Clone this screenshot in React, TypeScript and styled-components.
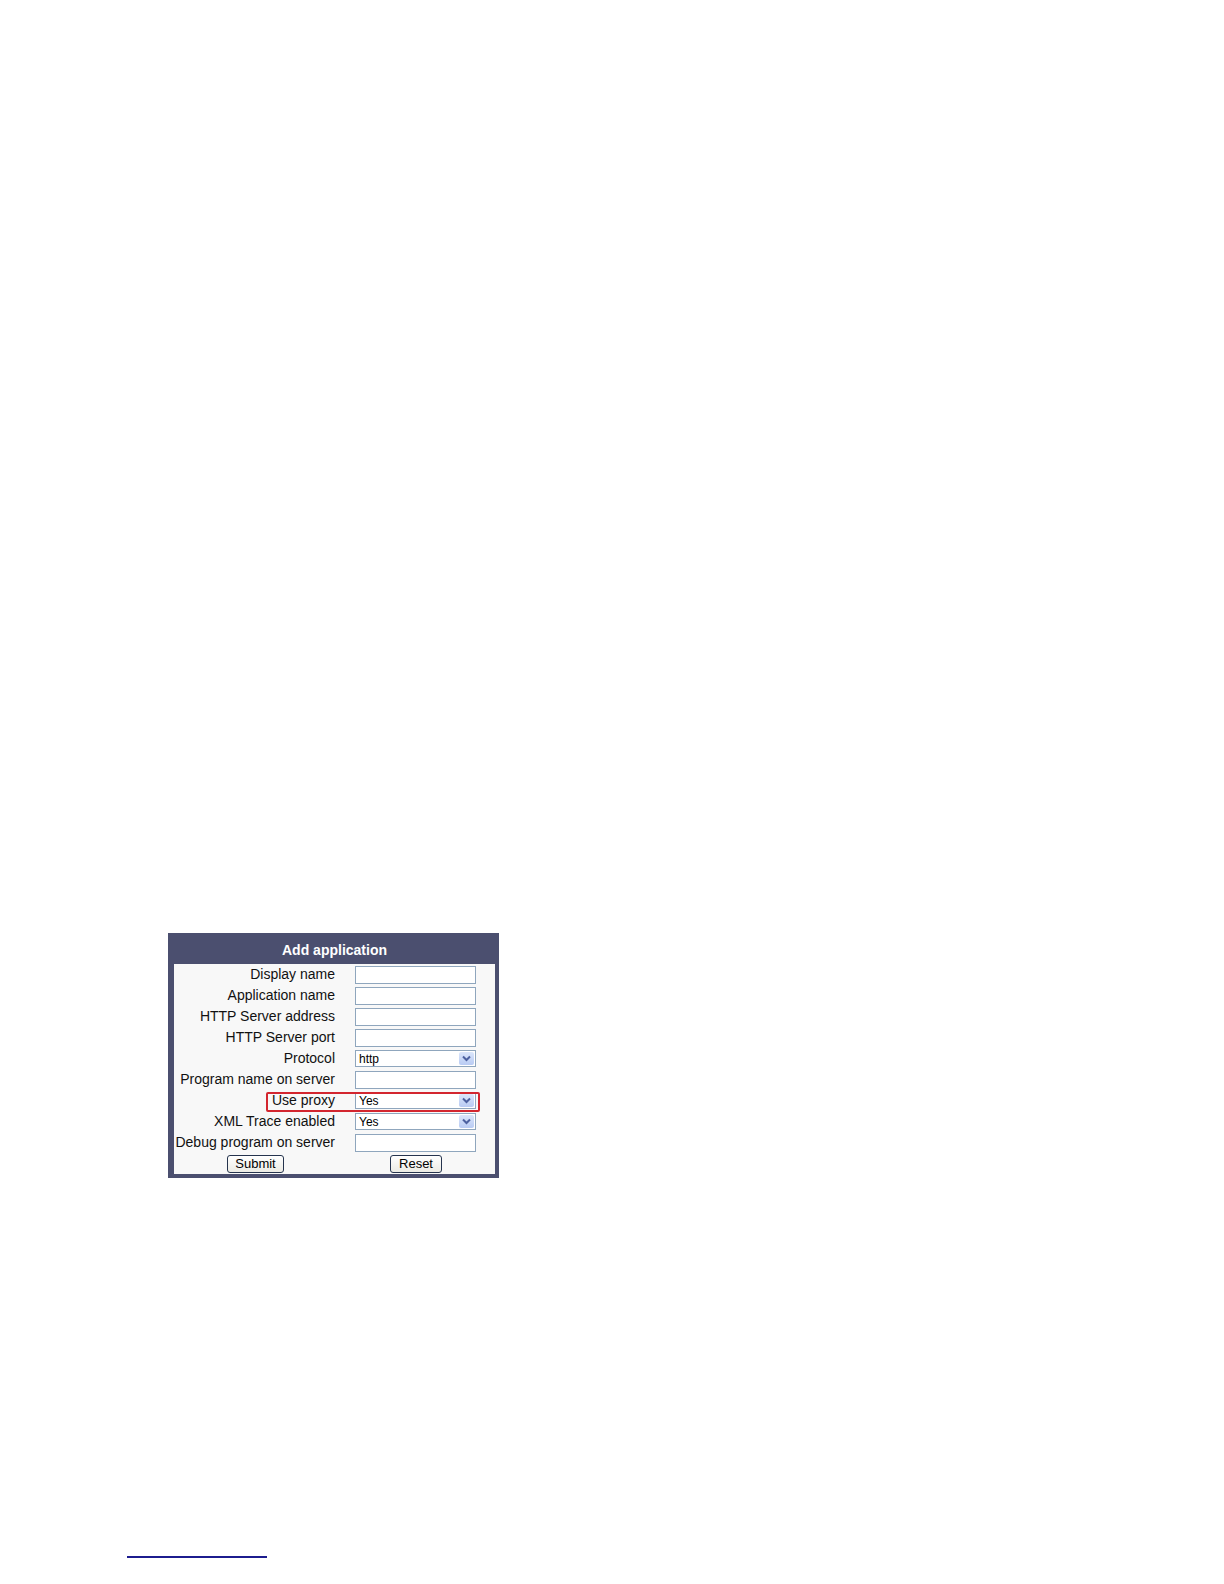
import React from 'react';
import styled, { createGlobalStyle } from 'styled-components';

const GlobalStyle = createGlobalStyle`
  html, body {
    margin: 0;
    padding: 0;
    background: #ffffff;
  }
  body {
    font-family: 'Liberation Sans', Arial, sans-serif;
  }
`;

const Page = styled.div`
  width: 1224px;
  height: 1584px;
  box-sizing: border-box;
  padding: 933px 0 0 168px;
  display: flex;
  flex-direction: column;
  align-items: flex-start;
`;

const Panel = styled.div`
  width: 331px;
  box-sizing: border-box;
  background: #4b4f6f;
  padding: 0 4px 4px 6px;
`;

const Title = styled.div`
  height: 31px;
  box-sizing: border-box;
  padding-top: 9px;
  text-align: center;
  color: #ffffff;
  font-weight: bold;
  font-size: 14px;
  line-height: 17px;
`;

const Form = styled.div`
  position: relative;
  background: #f8f8f8;
  display: grid;
  grid-template-columns: 172px 1fr;
  grid-auto-rows: 21px;
`;

const Label = styled.div`
  text-align: right;
  padding-right: 11px;
  font-size: 14px;
  line-height: 21px;
  color: #111111;
  white-space: nowrap;
`;

const Cell = styled.div`
  display: flex;
  align-items: center;
  padding-left: 9px;
`;

const TextBox = styled.div`
  width: 121px;
  height: 18px;
  box-sizing: border-box;
  border: 1px solid #8fa6bd;
  background: #ffffff;
`;

const Select = styled.div`
  width: 121px;
  height: 17px;
  box-sizing: border-box;
  border: 1px solid #8fa6bd;
  background: #ffffff;
  display: flex;
  align-items: center;
  justify-content: space-between;
  padding: 0 1px 0 3px;
  font-size: 12px;
  color: #000000;
`;

const Arrow = styled.div`
  width: 15px;
  height: 13px;
  background: linear-gradient(#dbe6fb, #b9cbf3);
  border-radius: 2px;
  display: flex;
  align-items: center;
  justify-content: center;
`;

const ButtonCell = styled.div<{ $pad: number }>`
  display: flex;
  align-items: center;
  padding-left: ${p => p.$pad}px;
  height: 22px;
`;

const Button = styled.div<{ $w: number }>`
  width: ${p => p.$w}px;
  height: 18px;
  box-sizing: border-box;
  border: 1px solid #26344e;
  border-radius: 3px;
  background: linear-gradient(#ffffff, #ecebe4);
  font-size: 13px;
  line-height: 16px;
  text-align: center;
  color: #000000;
`;

const Highlight = styled.div`
  position: absolute;
  left: 92px;
  top: 128px;
  width: 214px;
  height: 20px;
  box-sizing: border-box;
  border: 2px solid #d3262f;
  border-radius: 2px;
`;

const FootLink = styled.div`
  margin: 378px 0 0 -41px;
  width: 140px;
  height: 2px;
  background: #1c1c8e;
`;

const Chevron = () => (
  <svg width="9" height="7" viewBox="0 0 9 7">
    <path d="M1 1.5 L4.5 5 L8 1.5" fill="none" stroke="#4d61a0" strokeWidth="2" />
  </svg>
);

type Field = { label: string; kind: 'text' | 'select'; value?: string };

const fields: Field[] = [
  { label: 'Display name', kind: 'text' },
  { label: 'Application name', kind: 'text' },
  { label: 'HTTP Server address', kind: 'text' },
  { label: 'HTTP Server port', kind: 'text' },
  { label: 'Protocol', kind: 'select', value: 'http' },
  { label: 'Program name on server', kind: 'text' },
  { label: 'Use proxy', kind: 'select', value: 'Yes' },
  { label: 'XML Trace enabled', kind: 'select', value: 'Yes' },
  { label: 'Debug program on server', kind: 'text' },
];

export default function App() {
  return (
    <Page>
      <GlobalStyle />
      <Panel>
        <Title>Add application</Title>
        <Form>
          {fields.map(f => (
            <React.Fragment key={f.label}>
              <Label>{f.label}</Label>
              <Cell>
                {f.kind === 'text' ? (
                  <TextBox />
                ) : (
                  <Select>
                    <span>{f.value}</span>
                    <Arrow>
                      <Chevron />
                    </Arrow>
                  </Select>
                )}
              </Cell>
            </React.Fragment>
          ))}
          <ButtonCell $pad={53}>
            <Button $w={57}>Submit</Button>
          </ButtonCell>
          <ButtonCell $pad={44}>
            <Button $w={52}>Reset</Button>
          </ButtonCell>
          <Highlight />
        </Form>
      </Panel>
      <FootLink />
    </Page>
  );
}
